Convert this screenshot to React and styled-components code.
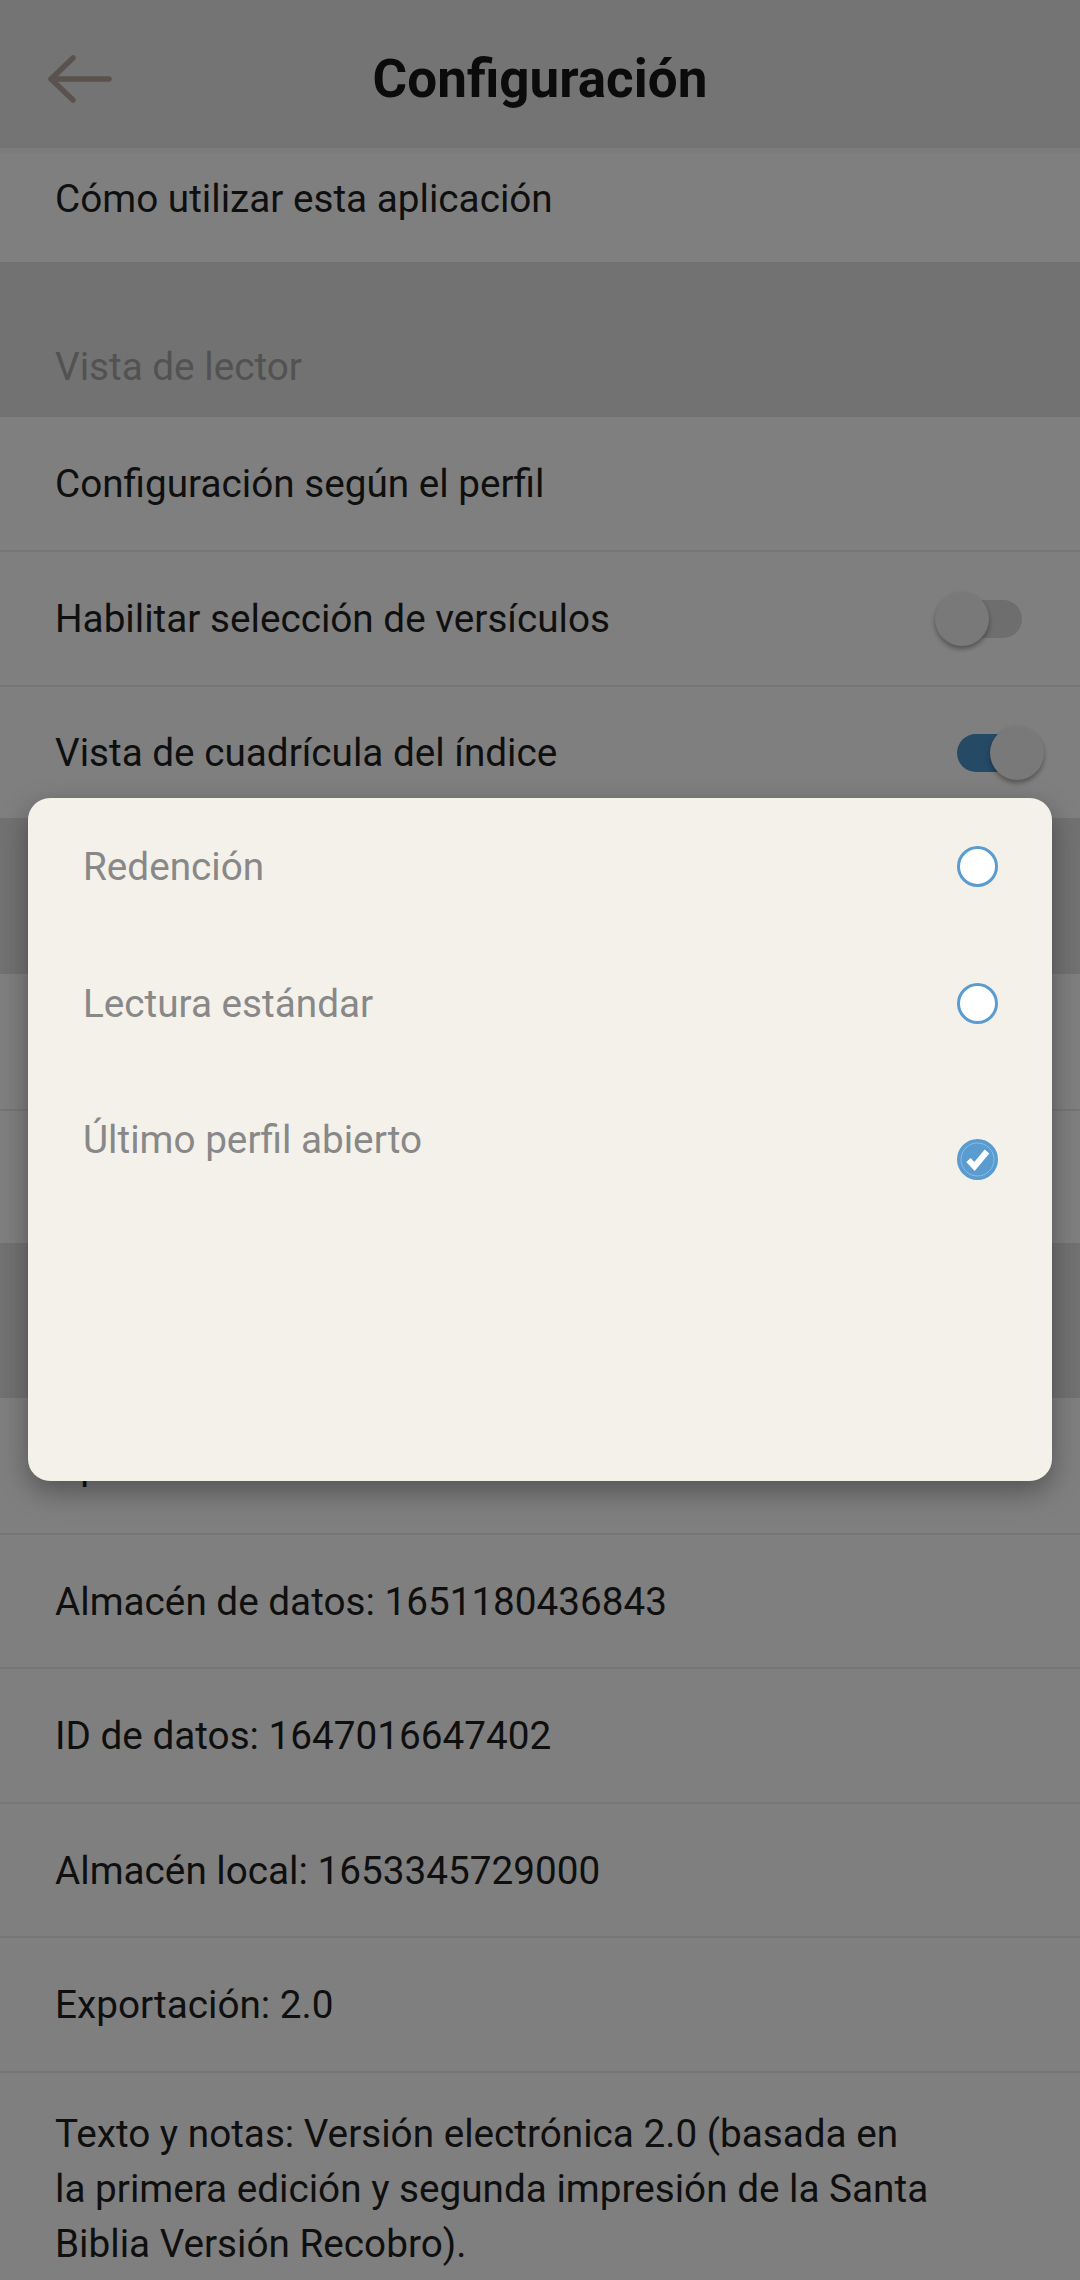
import React from "react";
import styled, { createGlobalStyle } from "styled-components";

const Global = createGlobalStyle`
  html, body {
    margin: 0;
    padding: 0;
    width: 1080px;
    height: 2280px;
    overflow: hidden;
    background: #ffffff;
  }
  body {
    font-family: Roboto, "Noto Sans", "Liberation Sans", sans-serif;
    -webkit-font-smoothing: antialiased;
  }
`;

const Screen = styled.div`
  position: relative;
  width: 1080px;
  height: 2280px;
  overflow: hidden;
  background: #ffffff;
`;

const Header = styled.header`
  height: 148px;
  background: #e8e8e8;
  display: grid;
  grid-template-columns: 148px 1fr 148px;
  align-items: center;
  border-bottom: 5px solid #f8f8f8;
`;

const BackButton = styled.div`
  display: flex;
  align-items: center;
  padding: 10px 0 0 46px;
  box-sizing: border-box;
  height: 100%;
`;

const Title = styled.h1`
  margin: 0;
  padding-top: 10px;
  text-align: center;
  font-size: 53px;
  font-weight: 700;
  color: #161616;
  letter-spacing: 0;
`;

const List = styled.div`
  display: flex;
  flex-direction: column;
`;

const Row = styled.div`
  display: flex;
  align-items: center;
  justify-content: space-between;
  min-height: ${(p) => p.$h || 133}px;
  box-sizing: border-box;
  padding: 0 0 ${(p) => p.$pb || 0}px 55px;
  background: #ffffff;
  border-top: ${(p) => (p.$divider ? "2px solid #ececec" : "none")};
`;

const RowText = styled.span`
  font-size: 38.7px;
  color: #1e1e1e;
  line-height: 55px;
`;

const LongRow = styled.div`
  padding: 33px 100px 40px 55px;
  background: #ffffff;
  border-top: 2px solid #ececec;
  font-size: 38.7px;
  line-height: 55px;
  color: #1e1e1e;
`;

const Section = styled.div`
  height: ${(p) => p.$h || 155}px;
  background: #e4e4e4;
  display: flex;
  align-items: flex-end;
  padding: 0 0 23px 55px;
  box-sizing: border-box;
  font-size: 38.7px;
  line-height: 55px;
  color: #a4a4a4;
`;

const SwitchWrap = styled.div`
  position: relative;
  width: 95px;
  height: 56px;
  margin-right: ${(p) => p.$mr}px;
  flex-shrink: 0;
`;

const Track = styled.div`
  position: absolute;
  left: 8px;
  right: 8px;
  top: 9px;
  height: 38px;
  border-radius: 19px;
  background: ${(p) => (p.$on ? "#4a94cd" : "#dcdcdc")};
`;

const Knob = styled.div`
  position: absolute;
  top: 1px;
  ${(p) => (p.$on ? "right: 0;" : "left: 0;")}
  width: 54px;
  height: 54px;
  border-radius: 50%;
  background: #f3f3f3;
  box-shadow: 0 3px 5px rgba(0, 0, 0, 0.35);
`;

const Overlay = styled.div`
  position: absolute;
  inset: 0;
  background: rgba(0, 0, 0, 0.5);
`;

const Dialog = styled.div`
  position: absolute;
  left: 28px;
  top: 798px;
  width: 1024px;
  height: 683px;
  border-radius: 22px;
  background: #f4f1ea;
  box-shadow: 0 10px 28px rgba(0, 0, 0, 0.35);
  display: flex;
  flex-direction: column;
`;

const Option = styled.div`
  display: flex;
  align-items: ${(p) => (p.$top ? "flex-start" : "center")};
  justify-content: space-between;
  height: 137px;
  box-sizing: border-box;
  padding: ${(p) => (p.$top ? "40px" : "0")} 54px 0 55px;
`;

const OptionText = styled.span`
  font-size: 38.7px;
  color: #888888;
  line-height: 55px;
`;

const Radio = styled.div`
  width: 41px;
  height: 41px;
  box-sizing: border-box;
  border-radius: 50%;
  border: 3px solid #5a9bd0;
  background: ${(p) => (p.$checked ? "#5a9bd0" : "#ffffff")};
  margin-top: ${(p) => p.$mt || 0}px;
  display: flex;
  align-items: center;
  justify-content: center;
  flex-shrink: 0;
`;

function Switch({ on, mr }) {
  return (
    <SwitchWrap $mr={mr}>
      <Track $on={on} />
      <Knob $on={on} />
    </SwitchWrap>
  );
}

function BackArrow() {
  return (
    <svg width="66" height="50" viewBox="0 0 66 50">
      <path
        d="M5 25 H63 M27 4 L5 25 L27 46"
        fill="none"
        stroke="#b4a49c"
        strokeWidth="5.5"
        strokeLinecap="round"
        strokeLinejoin="round"
      />
    </svg>
  );
}

function CheckMark() {
  return (
    <svg width="41" height="41" viewBox="0 0 41 41" style={{ margin: -3 }}>
      <circle cx="20.5" cy="20.5" r="16.5" fill="none" stroke="#8cbce2" strokeWidth="1" />
      <path
        d="M11.5 21 L17.5 27.5 L30 12.5"
        fill="none"
        stroke="#ffffff"
        strokeWidth="6"
        strokeLinejoin="miter"
      />
    </svg>
  );
}

export default function App() {
  return (
    <>
      <Global />
      <Screen>
        <Header>
          <BackButton>
            <BackArrow />
          </BackButton>
          <Title>Configuración</Title>
          <div />
        </Header>
        <List>
          <Row $h={109} $pb={18}>
            <RowText>Cómo utilizar esta aplicación</RowText>
          </Row>
          <Section>Vista de lector</Section>
          <Row>
            <RowText>Configuración según el perfil</RowText>
          </Row>
          <Row $divider $h={135}>
            <RowText>Habilitar selección de versículos</RowText>
            <Switch on={false} mr={50} />
          </Row>
          <Row $divider>
            <RowText>Vista de cuadrícula del índice</RowText>
            <Switch on={true} mr={36} />
          </Row>
          <Section $h={156} />
          <Row $h={135} />
          <Row $divider $h={134} />
          <Section />
          <Row $h={135}>
            <RowText>Aplicación: 2.4.1</RowText>
          </Row>
          <Row $divider $h={134}>
            <RowText>Almacén de datos: 1651180436843</RowText>
          </Row>
          <Row $divider $h={135}>
            <RowText>ID de datos: 1647016647402</RowText>
          </Row>
          <Row $divider $h={134}>
            <RowText>Almacén local: 1653345729000</RowText>
          </Row>
          <Row $divider $h={135}>
            <RowText>Exportación: 2.0</RowText>
          </Row>
          <LongRow>
            Texto y notas: Versión electrónica 2.0 (basada en
            <br />
            la primera edición y segunda impresión de la Santa
            <br />
            Biblia Versión Recobro).
          </LongRow>
        </List>
        <Overlay />
        <Dialog>
          <Option>
            <OptionText>Redención</OptionText>
            <Radio />
          </Option>
          <Option>
            <OptionText>Lectura estándar</OptionText>
            <Radio />
          </Option>
          <Option $top>
            <OptionText>Último perfil abierto</OptionText>
            <Radio $checked $mt={27}>
              <CheckMark />
            </Radio>
          </Option>
        </Dialog>
      </Screen>
    </>
  );
}
